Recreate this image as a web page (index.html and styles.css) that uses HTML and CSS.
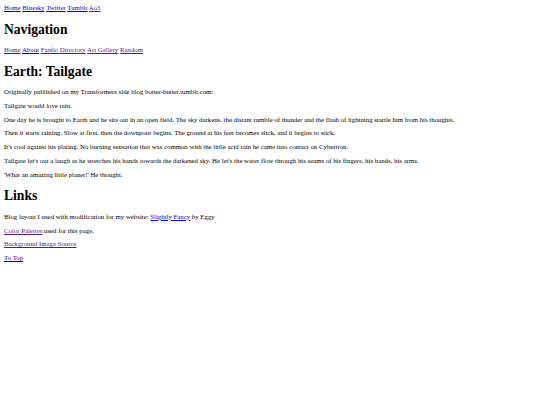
FILE: index.html
```html
<!DOCTYPE html>
<html lang="en">
<head>
  <meta charset="UTF-8" />
  <meta name="viewport" content="width=device-width, initial-scale=1.0"/>
  <title>Earth: Tailgate</title>
  <link rel="stylesheet" href="styles.css">
</head>
<body>
  <div class="topnav" id="top">
    <a href="#">Home</a>
    <a href="#">Bluesky</a>
    <a href="#">Twitter</a>
    <a href="#">Tumblr</a>
    <a href="#" class="seen">Ao3</a>
  </div>

  <h1>Navigation</h1>
  <div class="sitenav">
    <a href="#" class="seen">Home</a>
    <a href="#">About</a>
    <a href="#" class="seen">Fanfic Directory</a>
    <a href="#" class="seen">Art Gallery</a>
    <a href="#" class="seen">Random</a>
  </div>

  <h1>Earth: Tailgate</h1>
  <p>Originally published on my Transformers side blog botter-butter.tumblr.com:</p>
  <p>Tailgate would love rain.</p>
  <p>One day he is brought to Earth and he sits out in an open field. The sky darkens, the distant rumble of thunder and the flash of lightning startle him from his thoughts.</p>
  <p>Then it starts raining. Slow at first, then the downpour begins. The ground at his feet becomes slick, and it begins to stick.</p>
  <p>It's cool against his plating. No burning sensation that was common with the little acid rain he came into contact on Cybertron.</p>
  <p>Tailgate let's out a laugh as he stretches his hands towards the darkened sky. He let's the water flow through his seams of his fingers, his hands, his arms.</p>
  <p>'What an amazing little planet!' He thought.</p>

  <h1>Links</h1>
  <p>Blog layout I used with modification for my website: <a href="#">Slightly Fancy</a> by Eggy</p>
  <p><a href="#" class="seen">Color Palettes</a> used for this page.</p>
  <p><a href="#" class="seen">Background Image Source</a></p>
  <p><a href="#top">To Top</a></p>
</body>
</html>
```

FILE: styles.css
```css
body { margin: 4px; font-family: "Liberation Serif", "Times New Roman", serif; font-size: 6.8px; color: #000; background: #fff; }
a { color: #0000ee; }
a.seen { color: #551a8b; }
h1 { font-size: 13.6px; margin: 10.5px 0 8.5px; }
p { margin: 1em 0; }
```
